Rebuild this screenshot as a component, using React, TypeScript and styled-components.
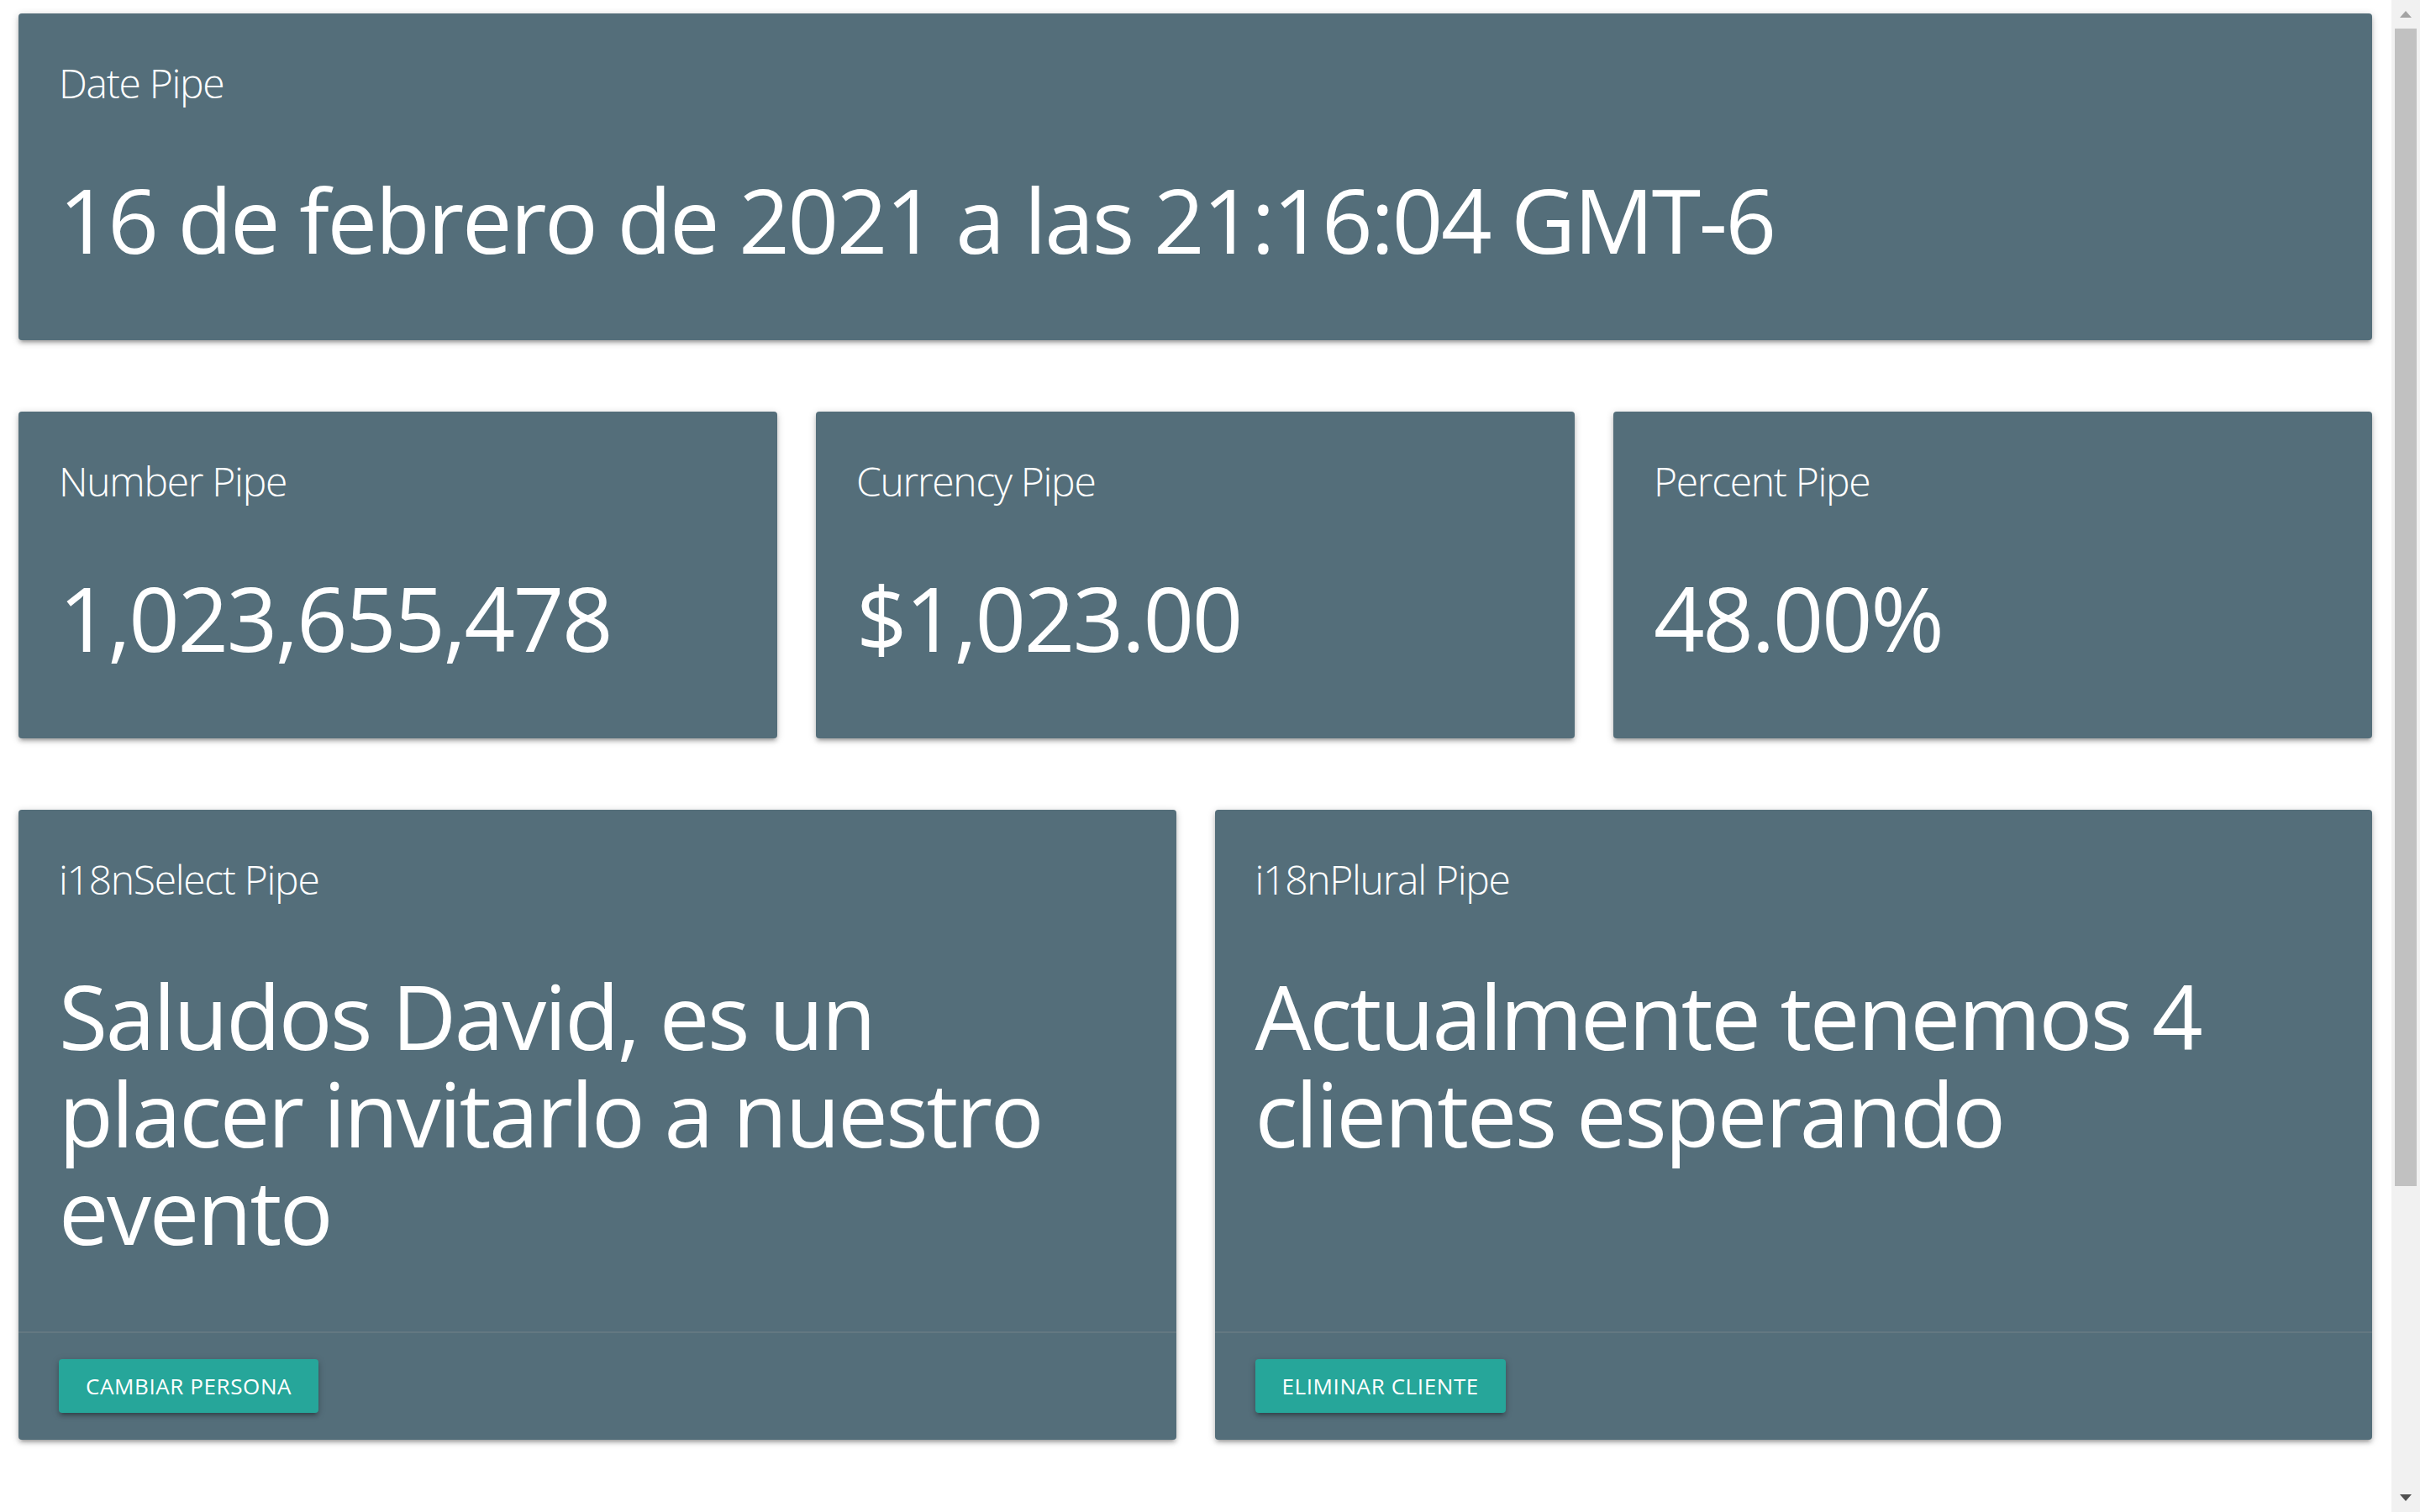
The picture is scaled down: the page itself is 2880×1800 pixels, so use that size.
import React from "react";
import styled, { createGlobalStyle } from "styled-components";

const GlobalStyle = createGlobalStyle`
  html, body {
    margin: 0;
    padding: 0;
    background: #ffffff;
    overflow: hidden;
  }
  body {
    font-family: "Open Sans", "Noto Sans", sans-serif;
    color: #ffffff;
  }
  *, *::before, *::after {
    box-sizing: border-box;
  }
`;

const Shell = styled.div`
  display: flex;
  height: 100vh;
  overflow: hidden;
`;

const Page = styled.main`
  flex: 1;
  min-width: 0;
  display: flex;
  flex-direction: column;
  gap: 85px;
  padding: 16px 23px 0 22px;
`;

const Row = styled.section<{ $cols: number }>`
  display: grid;
  grid-template-columns: repeat(${(p) => p.$cols}, minmax(0, 1fr));
  column-gap: 46px;
  align-items: stretch;
`;

const Card = styled.article`
  display: flex;
  flex-direction: column;
  background: #546e7a;
  border-radius: 4px;
  box-shadow: 0 4px 4px 0 rgba(0, 0, 0, 0.14), 0 6px 2px -4px rgba(0, 0, 0, 0.12),
    0 2px 10px 0 rgba(0, 0, 0, 0.2);
`;

const CardContent = styled.div`
  flex: 1;
  padding: 51px 48px 48px;
`;

const CardTitle = styled.h3`
  margin: 0;
  font-size: 48px;
  line-height: 64px;
  font-weight: 300;
  letter-spacing: -1.3px;
  color: #ffffff;
`;

const Value = styled.h2`
  margin: 72px 0 38px;
  font-size: 106px;
  line-height: 116px;
  font-weight: 400;
  letter-spacing: -2.4px;
  color: #ffffff;
`;

const CardAction = styled.div`
  border-top: 2px solid rgba(160, 160, 160, 0.2);
  padding: 31px 48px 32px;
`;

const Button = styled.button`
  display: inline-flex;
  align-items: center;
  height: 64px;
  padding: 0 32px;
  border: none;
  border-radius: 4px;
  background: #26a69a;
  color: #ffffff;
  font-family: "Open Sans", "Noto Sans", sans-serif;
  font-size: 26px;
  letter-spacing: 0.6px;
  text-transform: uppercase;
  box-shadow: 0 4px 4px 0 rgba(0, 0, 0, 0.14), 0 6px 2px -4px rgba(0, 0, 0, 0.12),
    0 2px 10px 0 rgba(0, 0, 0, 0.2);
  cursor: pointer;
`;

const ScrollBar = styled.aside`
  width: 34px;
  flex: none;
  display: flex;
  flex-direction: column;
  background: #f1f1f1;
`;

const ScrollButton = styled.div`
  height: 34px;
  flex: none;
  display: flex;
  align-items: center;
  justify-content: center;
`;

const ScrollTrack = styled.div`
  flex: 1;
  padding: 0 4px;
`;

const ScrollThumb = styled.div`
  height: 1378px;
  background: #c1c1c1;
`;

const Arrow = ({ up }: { up?: boolean }) => (
  <svg width="14" height="8" viewBox="0 0 14 8" aria-hidden="true">
    {up ? (
      <path d="M7 0 L14 8 L0 8 Z" fill="#a3a3a3" />
    ) : (
      <path d="M0 0 L14 0 L7 8 Z" fill="#505050" />
    )}
  </svg>
);

type PipeCardProps = {
  title: string;
  value: string;
  action?: string;
};

const PipeCard = ({ title, value, action }: PipeCardProps) => (
  <Card>
    <CardContent>
      <CardTitle>{title}</CardTitle>
      <Value>{value}</Value>
    </CardContent>
    {action && (
      <CardAction>
        <Button type="button">{action}</Button>
      </CardAction>
    )}
  </Card>
);

export default function App() {
  return (
    <>
      <GlobalStyle />
      <Shell>
        <Page>
          <Row $cols={1}>
            <PipeCard title="Date Pipe" value="16 de febrero de 2021 a las 21:16:04 GMT-6" />
          </Row>
          <Row $cols={3}>
            <PipeCard title="Number Pipe" value="1,023,655,478" />
            <PipeCard title="Currency Pipe" value="$1,023.00" />
            <PipeCard title="Percent Pipe" value="48.00%" />
          </Row>
          <Row $cols={2}>
            <PipeCard
              title="i18nSelect Pipe"
              value="Saludos David, es un placer invitarlo a nuestro evento"
              action="Cambiar persona"
            />
            <PipeCard
              title="i18nPlural Pipe"
              value="Actualmente tenemos 4 clientes esperando"
              action="Eliminar cliente"
            />
          </Row>
        </Page>
        <ScrollBar>
          <ScrollButton>
            <Arrow up />
          </ScrollButton>
          <ScrollTrack>
            <ScrollThumb />
          </ScrollTrack>
          <ScrollButton>
            <Arrow />
          </ScrollButton>
        </ScrollBar>
      </Shell>
    </>
  );
}
